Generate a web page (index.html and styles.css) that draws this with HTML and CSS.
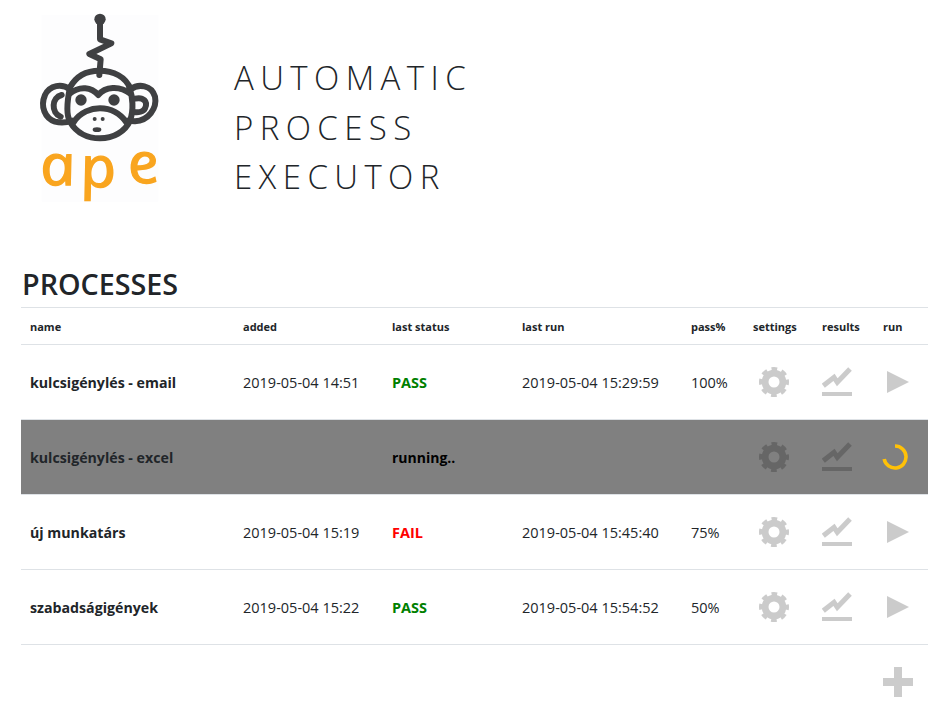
FILE: index.html
```html
<!DOCTYPE html>
<html lang="hu">
<head>
    <meta charset="UTF-8">
    <title>Automatic Process Executor</title>
    <link rel="stylesheet" href="styles.css">
</head>
<body>
    <svg width="0" height="0" class="defs">
        <symbol id="icon-gear" viewBox="0 0 30 30">
            <circle cx="15" cy="15" r="8.9" fill="none" stroke="#000" stroke-width="6.8"/>
            <circle cx="15" cy="15" r="13" fill="none" stroke="#000" stroke-width="4" stroke-dasharray="5.6 4.6" stroke-dashoffset="2.8"/>
        </symbol>
        <symbol id="icon-chart" viewBox="0 0 30 32">
            <polyline points="1.3,19.7 12,11.3 15.3,16.3 28,3" fill="none" stroke="#000" stroke-width="5"/>
            <rect x="0" y="26" width="30" height="4"/>
        </symbol>
        <symbol id="icon-play" viewBox="0 0 22 22">
            <polygon points="0,0 22,11 0,22"/>
        </symbol>
    </svg>

    <div class="container">
        <header class="top">
            <svg class="logo" viewBox="0 0 480 645">
                <rect x="65" y="45" width="350" height="560" fill="#fdfdfe"/>
                <g fill="none" stroke="#3f4042" stroke-width="18" stroke-linejoin="round" stroke-linecap="round">
                    <polyline points="240,65 240,118 274,130 208,162 242,178 238,225"/>
                    <path d="M150 262 C170 225 205 212 238 212 C280 212 318 230 332 268"/>
                    <path d="M150 268 C125 250 90 255 75 285 C60 320 75 355 105 365 C125 370 140 368 155 362"/>
                    <path d="M332 268 C355 250 395 255 405 290 C412 325 385 362 345 364 L322 362"/>
                    <path d="M125 285 C95 292 92 338 122 350"/>
                    <path d="M345 296 C370 290 385 305 375 325 C370 335 355 338 342 336"/>
                    <path d="M150 262 C142 300 136 340 150 365 C170 400 205 415 240 415 C280 415 315 395 330 362 C342 330 338 290 328 262"/>
                    <path d="M148 282 C180 255 215 262 235 285 C255 260 298 255 332 282"/>
                    <path d="M160 368 C180 335 215 325 240 325 C270 325 300 340 320 368"/>
                </g>
                <g fill="#3f4042">
                    <circle cx="240" cy="58" r="17"/>
                    <circle cx="183" cy="300" r="17"/>
                    <circle cx="282" cy="300" r="17"/>
                    <circle cx="224" cy="357" r="6"/>
                    <circle cx="248" cy="357" r="6"/>
                    <ellipse cx="231" cy="389" rx="13" ry="7"/>
                </g>
                <text class="logo-text" transform="matrix(1.1 0 0.21 1 0 0)" x="-43 66 198" y="556 560 548">ape</text>
            </svg>
            <div class="title">
                <div>AUTOMATIC</div>
                <div>PROCESS</div>
                <div>EXECUTOR</div>
            </div>
        </header>

        <h3>PROCESSES</h3>

        <table>
            <thead>
                <tr>
                    <th class="c-name">name</th>
                    <th class="c-added">added</th>
                    <th class="c-status">last status</th>
                    <th class="c-run">last run</th>
                    <th class="c-pass">pass%</th>
                    <th class="c-settings">settings</th>
                    <th class="c-results">results</th>
                    <th class="c-action">run</th>
                </tr>
            </thead>
            <tbody>
                <tr>
                    <td class="name">kulcsigénylés - email</td>
                    <td>2019-05-04 14:51</td>
                    <td class="status pass">PASS</td>
                    <td>2019-05-04 15:29:59</td>
                    <td>100%</td>
                    <td><svg class="icon gear"><use href="#icon-gear"/></svg></td>
                    <td><svg class="icon chart"><use href="#icon-chart"/></svg></td>
                    <td><svg class="icon play"><use href="#icon-play"/></svg></td>
                </tr>
                <tr class="running">
                    <td class="name">kulcsigénylés - excel</td>
                    <td></td>
                    <td class="status">running..</td>
                    <td></td>
                    <td></td>
                    <td><svg class="icon gear"><use href="#icon-gear"/></svg></td>
                    <td><svg class="icon chart"><use href="#icon-chart"/></svg></td>
                    <td>
                        <svg class="spinner" viewBox="0 0 26 26">
                            <path d="M2.2 15 A11 11 0 1 0 13 2" fill="none" stroke="#ffc107" stroke-width="3.6"/>
                        </svg>
                    </td>
                </tr>
                <tr>
                    <td class="name">új munkatárs</td>
                    <td>2019-05-04 15:19</td>
                    <td class="status fail">FAIL</td>
                    <td>2019-05-04 15:45:40</td>
                    <td>75%</td>
                    <td><svg class="icon gear"><use href="#icon-gear"/></svg></td>
                    <td><svg class="icon chart"><use href="#icon-chart"/></svg></td>
                    <td><svg class="icon play"><use href="#icon-play"/></svg></td>
                </tr>
                <tr>
                    <td class="name">szabadságigények</td>
                    <td>2019-05-04 15:22</td>
                    <td class="status pass">PASS</td>
                    <td>2019-05-04 15:54:52</td>
                    <td>50%</td>
                    <td><svg class="icon gear"><use href="#icon-gear"/></svg></td>
                    <td><svg class="icon chart"><use href="#icon-chart"/></svg></td>
                    <td><svg class="icon play"><use href="#icon-play"/></svg></td>
                </tr>
            </tbody>
        </table>

        <div class="add-row">
            <div class="add"></div>
        </div>
    </div>
</body>
</html>
```

FILE: styles.css
```css
body {
    font-family: 'Open Sans', sans-serif;
    color: #212529;
    background-color: #fff;
    margin: 0;
    padding: 0;
}
.defs {
    position: absolute;
}
.container {
    padding: 0 20px 0 21px;
}
.top {
    display: flex;
    height: 215px;
}
.logo {
    width: 160px;
    height: 215px;
    margin-left: -1px;
    flex: none;
}
.logo-text {
    font-family: 'Open Sans', sans-serif;
    font-style: italic;
    font-size: 170px;
    fill: #f9a51f;
    stroke: #f9a51f;
    stroke-width: 4px;
}
.title {
    margin: 53px 0 0 54px;
    font-size: 33px;
    font-weight: 300;
    line-height: 49.5px;
    letter-spacing: 6.4px;
}
h3 {
    margin: 49px 0 0 1px;
    height: 43px;
    font-size: 28.7px;
    font-weight: 600;
    line-height: 40px;
}
table {
    width: 907px;
    table-layout: fixed;
    border-collapse: collapse;
}
th, td {
    box-sizing: border-box;
}
th {
    height: 37px;
    padding: 0 0 0 9px;
    font-size: 11px;
    font-weight: 700;
    text-align: left;
    border-top: 1px solid #dee2e6;
    border-bottom: 1px solid #dee2e6;
}
td {
    height: 75px;
    padding: 0 0 0 9px;
    font-size: 14.5px;
    border-bottom: 1px solid #dee2e6;
}
.c-name { width: 213px; }
.c-added { width: 149px; }
.c-status { width: 130px; }
.c-run { width: 169px; }
.c-pass { width: 62px; }
.c-settings { width: 69px; }
.c-results { width: 61px; }
.c-action { width: 54px; }
.name {
    font-size: 14.2px;
    font-weight: 700;
}
.status {
    font-size: 14px;
    font-weight: 700;
}
.pass {
    color: #008000;
    font-size: 14.5px;
}
.fail {
    color: #ff0000;
    font-size: 14.5px;
}
.running td {
    background-color: #808080;
}
.running .status {
    color: #000;
}
.icon {
    display: block;
    opacity: 0.2;
}
.gear {
    width: 30px;
    height: 30px;
    margin-left: 6px;
}
.chart {
    width: 30px;
    height: 32px;
}
.play {
    width: 22px;
    height: 22px;
    margin-left: 4px;
}
.spinner {
    display: block;
    width: 26px;
    height: 26px;
    margin-left: -1px;
}
.add-row {
    display: flex;
    justify-content: flex-end;
    padding: 22px 15px 0 0;
}
.add {
    width: 30px;
    height: 30px;
    background:
        linear-gradient(#ccc, #ccc) center / 8px 30px no-repeat,
        linear-gradient(#ccc, #ccc) center / 30px 8px no-repeat;
}
```
